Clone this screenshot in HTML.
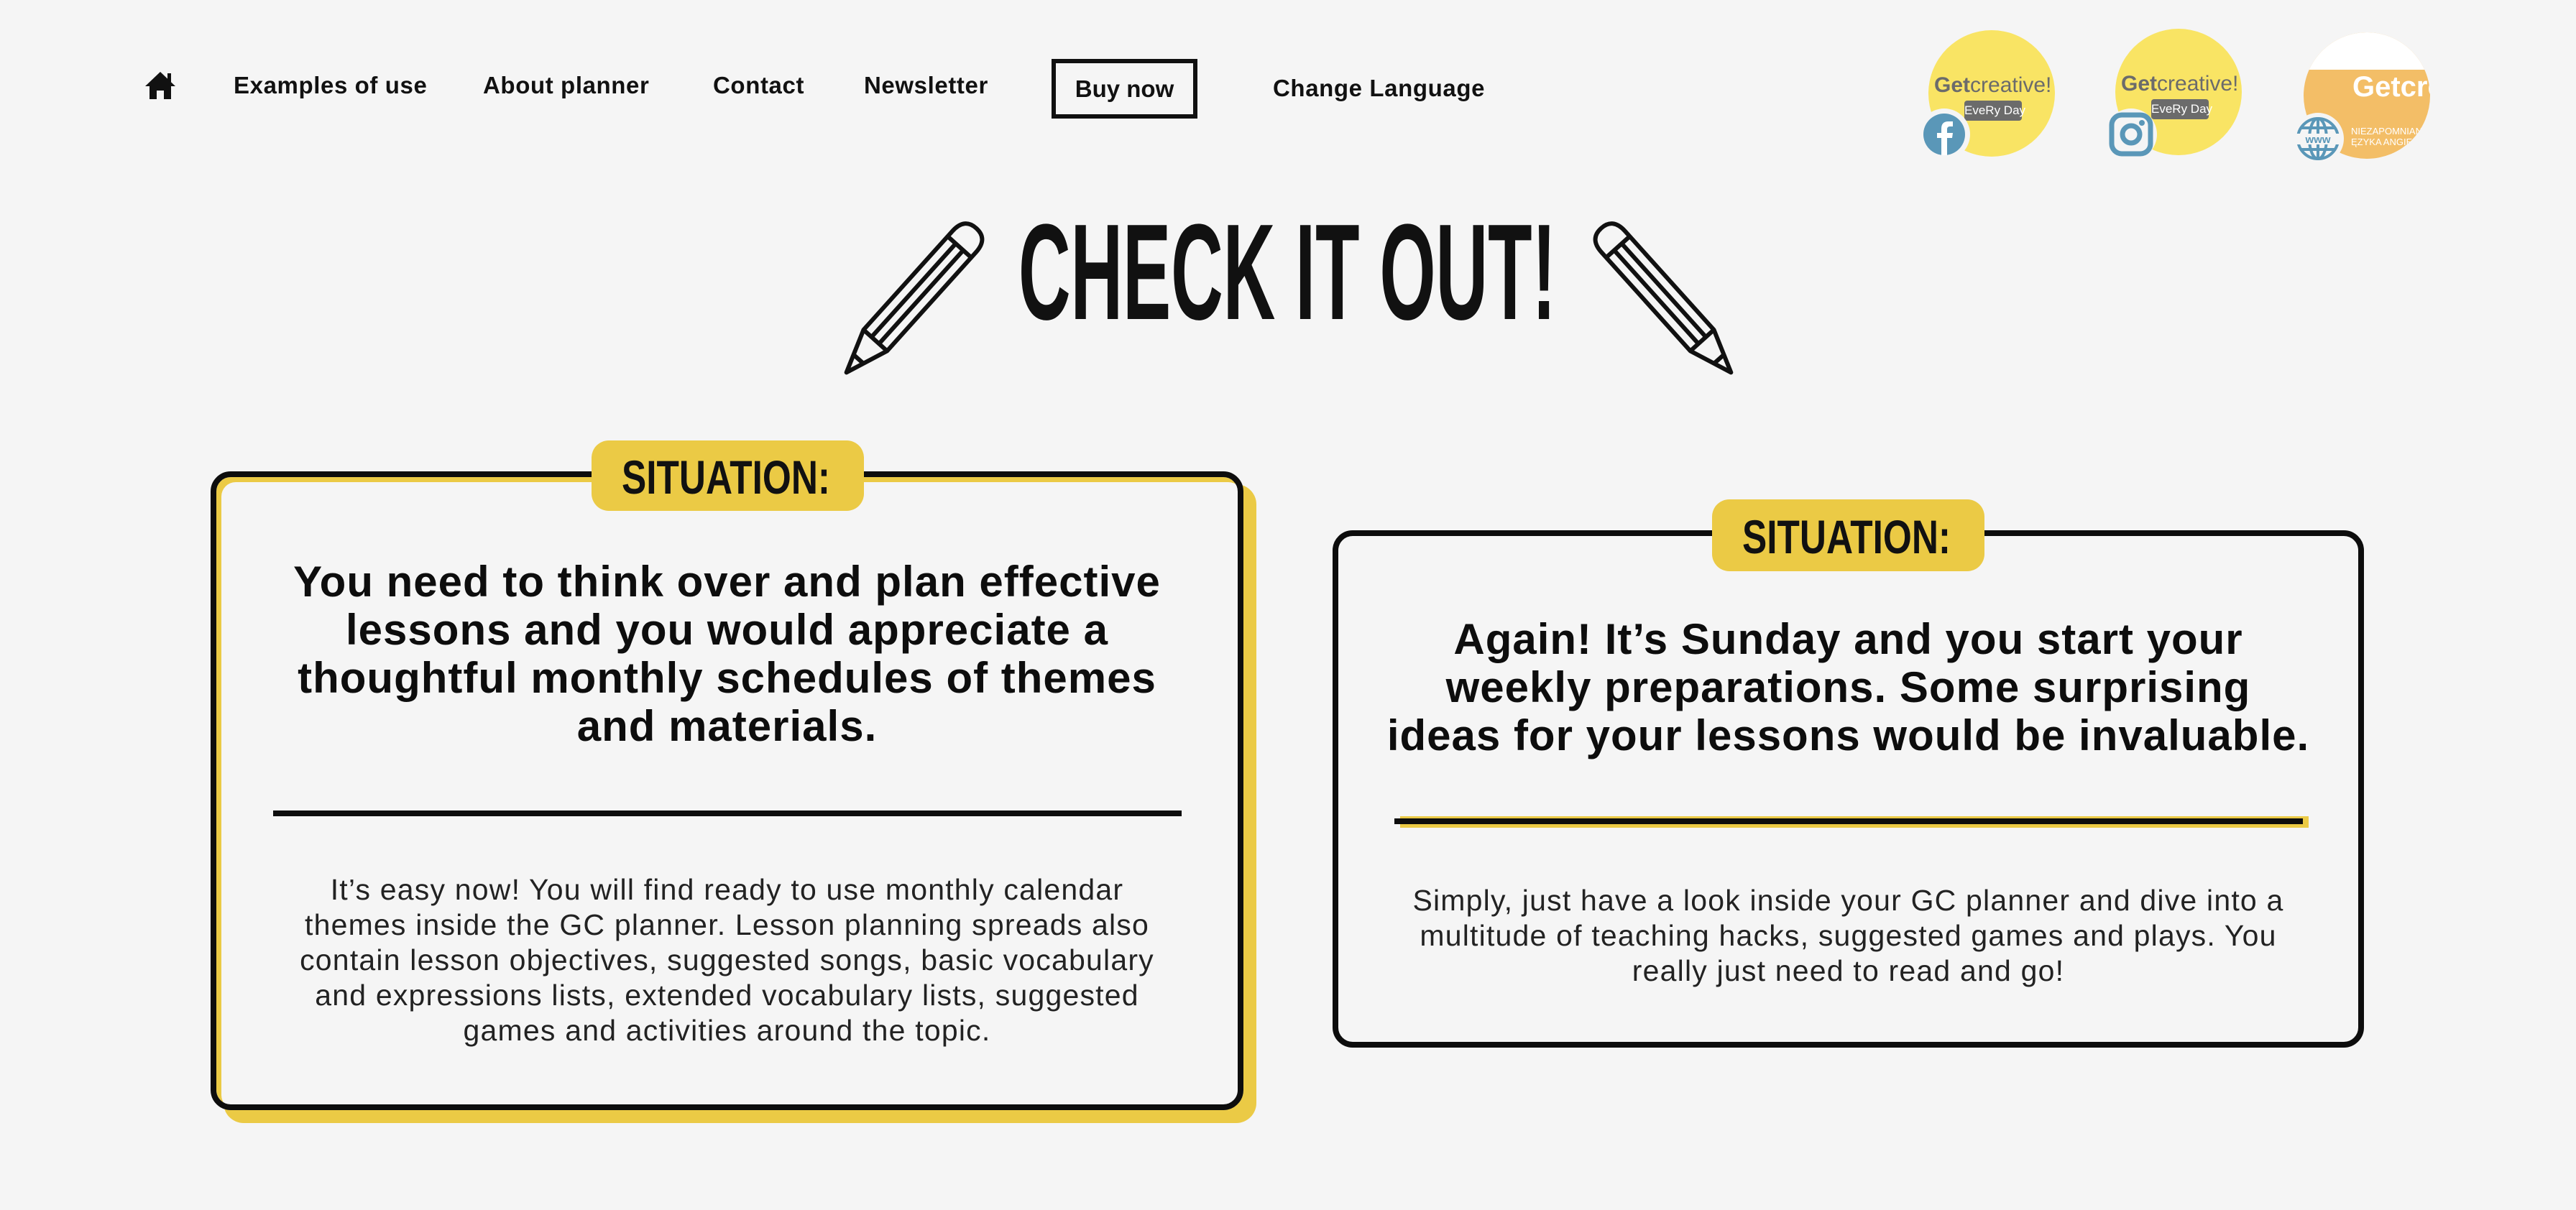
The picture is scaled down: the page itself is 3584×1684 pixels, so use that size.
<!DOCTYPE html>
<html><head><meta charset="utf-8"><style>
*{margin:0;padding:0;box-sizing:border-box}
body{width:3584px;height:1684px;background:#f5f5f5;position:relative;overflow:hidden;font-family:"Liberation Sans",sans-serif;color:#111}
.nav{position:absolute;font-weight:bold;font-size:33px;top:100px;white-space:nowrap;letter-spacing:0.6px}
.buy{position:absolute;left:1463px;top:82px;width:203px;height:83px;border:6px solid #111;font-weight:bold;font-size:33px;text-align:center;line-height:71px}
.card{position:absolute;border:8px solid #0d0d0d;border-radius:28px;text-align:center}
.h{font-weight:bold;font-size:60px;line-height:67px;color:#0d0d0d;letter-spacing:1px;white-space:nowrap}
.p{font-size:41px;line-height:49px;color:#222;font-weight:normal;letter-spacing:1.2px;white-space:nowrap}
.soc{position:absolute;width:176px;height:176px;border-radius:50%;background:#f9e464;overflow:hidden}
.gc{position:absolute;left:8px;top:60px;font-size:30px;color:#6b6b6b;white-space:nowrap}
.ed{position:absolute;left:50px;top:98px;width:80px;height:28px;background:#6b6b6b;border-radius:4px;color:#fff;font-size:17px;text-align:center;line-height:28px;white-space:nowrap}
</style></head><body>

<svg style="position:absolute;left:200px;top:98px" width="46" height="42" viewBox="0 0 46 42"><path d="M23 2 L2 22 L8 22 L8 40 L18 40 L18 28 L28 28 L28 40 L38 40 L38 22 L44 22 Z" fill="#111"/><rect x="33" y="4" width="5" height="12" fill="#111"/></svg>
<div class="nav" style="left:325px">Examples of use</div>
<div class="nav" style="left:672px">About planner</div>
<div class="nav" style="left:992px">Contact</div>
<div class="nav" style="left:1202px">Newsletter</div>
<div class="buy">Buy now</div>
<div class="nav" style="left:1771px;top:104px">Change Language</div>

<div class="soc" style="left:2683px;top:42px"><div class="gc"><b>Get</b>creative!</div><div class="ed">EveRy Day</div></div>
<div class="soc" style="left:2943px;top:40px"><div class="gc"><b>Get</b>creative!</div><div class="ed">EveRy Day</div></div>
<div class="soc" style="left:3205px;top:45px;background:#f3be67">
<div style="position:absolute;left:0;top:0;width:176px;height:52px;background:#fff"></div>
<div style="position:absolute;left:68px;top:54px;font-size:40px;color:#fff;font-weight:bold">Getcre</div>
<div style="position:absolute;left:66px;top:130px;font-size:13px;color:#fff;white-space:nowrap">NIEZAPOMNIANE<br>ĘZYKA ANGIELS</div></div>

<svg style="position:absolute;left:2668px;top:150px" width="74" height="74"><circle cx="37" cy="37" r="36" fill="#f5f5f5"/><circle cx="37" cy="37" r="29" fill="#5a97b8"/><path d="M41 66 V42 H48 L49 35 H41 V30 Q41 26 45 26 H49 V19 H43 Q33 19 33 29 V35 H27 V42 H33 V66 Z" fill="#fff"/></svg>
<svg style="position:absolute;left:2928px;top:150px" width="74" height="74"><circle cx="37" cy="37" r="36" fill="#f5f5f5"/><rect x="10" y="10" width="54" height="54" rx="14" fill="none" stroke="#5a97b8" stroke-width="7"/><circle cx="37" cy="37" r="12" fill="none" stroke="#5a97b8" stroke-width="7"/><circle cx="52" cy="21" r="4" fill="#5a97b8"/></svg>
<svg style="position:absolute;left:3188px;top:156px" width="74" height="74"><circle cx="37" cy="37" r="36" fill="#f5f5f5"/><g fill="none" stroke="#5a97b8" stroke-width="4"><circle cx="37" cy="37" r="28"/><ellipse cx="37" cy="37" rx="12" ry="28"/><line x1="9" y1="37" x2="65" y2="37"/><line x1="37" y1="9" x2="37" y2="65"/><path d="M14 22 H60 M14 52 H60"/></g><rect x="7" y="30" width="60" height="15" fill="#f5f5f5"/><text x="37" y="43" font-size="15" font-weight="bold" fill="#5a97b8" text-anchor="middle" font-family="Liberation Sans">www</text></svg>

<svg style="position:absolute;left:0;top:0" width="3584" height="560">
<text x="1417" y="444" textLength="748" lengthAdjust="spacingAndGlyphs" font-family="Liberation Sans Narrow, Liberation Sans" font-weight="bold" font-size="190" fill="#111">CHECK IT OUT!</text>
<g transform="translate(1268,418) rotate(42)" fill="none" stroke="#111" stroke-width="6" stroke-linejoin="round">
<path d="M-22 -110 Q-22 -135 0 -135 Q22 -135 22 -110 V75 L0 135 L-22 75 Z"/>
<line x1="-22" y1="-100" x2="22" y2="-100"/><line x1="-7" y1="-100" x2="-7" y2="75"/><line x1="7" y1="-100" x2="7" y2="75"/><line x1="-22" y1="75" x2="22" y2="75"/><line x1="-9" y1="110" x2="9" y2="110"/></g>
<g transform="translate(2318,418) rotate(-42)" fill="none" stroke="#111" stroke-width="6" stroke-linejoin="round">
<path d="M-22 -110 Q-22 -135 0 -135 Q22 -135 22 -110 V75 L0 135 L-22 75 Z"/>
<line x1="-22" y1="-100" x2="22" y2="-100"/><line x1="-7" y1="-100" x2="-7" y2="75"/><line x1="7" y1="-100" x2="7" y2="75"/><line x1="-22" y1="75" x2="22" y2="75"/><line x1="-9" y1="110" x2="9" y2="110"/></g>
</svg>

<div class="card" style="left:293px;top:656px;width:1437px;height:889px;box-shadow:18px 18px 0 #ebca45, inset 7px 7px 0 #ebca45">
<div class="h" style="position:absolute;left:0;right:0;top:112px">You need to think over and plan effective<br>lessons and you would appreciate a<br>thoughtful monthly schedules of themes<br>and materials.</div>
<div style="position:absolute;left:79px;top:464px;width:1264px;height:8px;background:#0d0d0d"></div>
<div class="p" style="position:absolute;left:0;right:0;top:550px">It’s easy now! You will find ready to use monthly calendar<br>themes inside the GC planner. Lesson planning spreads also<br>contain lesson objectives, suggested songs, basic vocabulary<br>and expressions lists, extended vocabulary lists, suggested<br>games and activities around the topic.</div>
</div>
<svg style="position:absolute;left:823px;top:613px" width="379" height="98"><rect width="379" height="98" rx="24" fill="#ebca45"/><text x="42" y="74" textLength="290" lengthAdjust="spacingAndGlyphs" font-family="Liberation Sans Narrow, Liberation Sans" font-weight="bold" font-size="66" fill="#111">SITUATION:</text></svg>

<div class="card" style="left:1854px;top:738px;width:1435px;height:720px">
<div class="h" style="position:absolute;left:0;right:0;top:110px">Again! It’s Sunday and you start your<br>weekly preparations. Some surprising<br>ideas for your lessons would be invaluable.</div>
<div style="position:absolute;left:86px;top:390px;width:1264px;height:16px;background:#ebca45"></div>
<div style="position:absolute;left:78px;top:393px;width:1264px;height:8px;background:#0d0d0d"></div>
<div class="p" style="position:absolute;left:0;right:0;top:483px">Simply, just have a look inside your GC planner and dive into a<br>multitude of teaching hacks, suggested games and plays. You<br>really just need to read and go!</div>
</div>
<svg style="position:absolute;left:2382px;top:695px" width="379" height="100"><rect width="379" height="100" rx="24" fill="#ebca45"/><text x="42" y="75" textLength="290" lengthAdjust="spacingAndGlyphs" font-family="Liberation Sans Narrow, Liberation Sans" font-weight="bold" font-size="66" fill="#111">SITUATION:</text></svg>
</body></html>
